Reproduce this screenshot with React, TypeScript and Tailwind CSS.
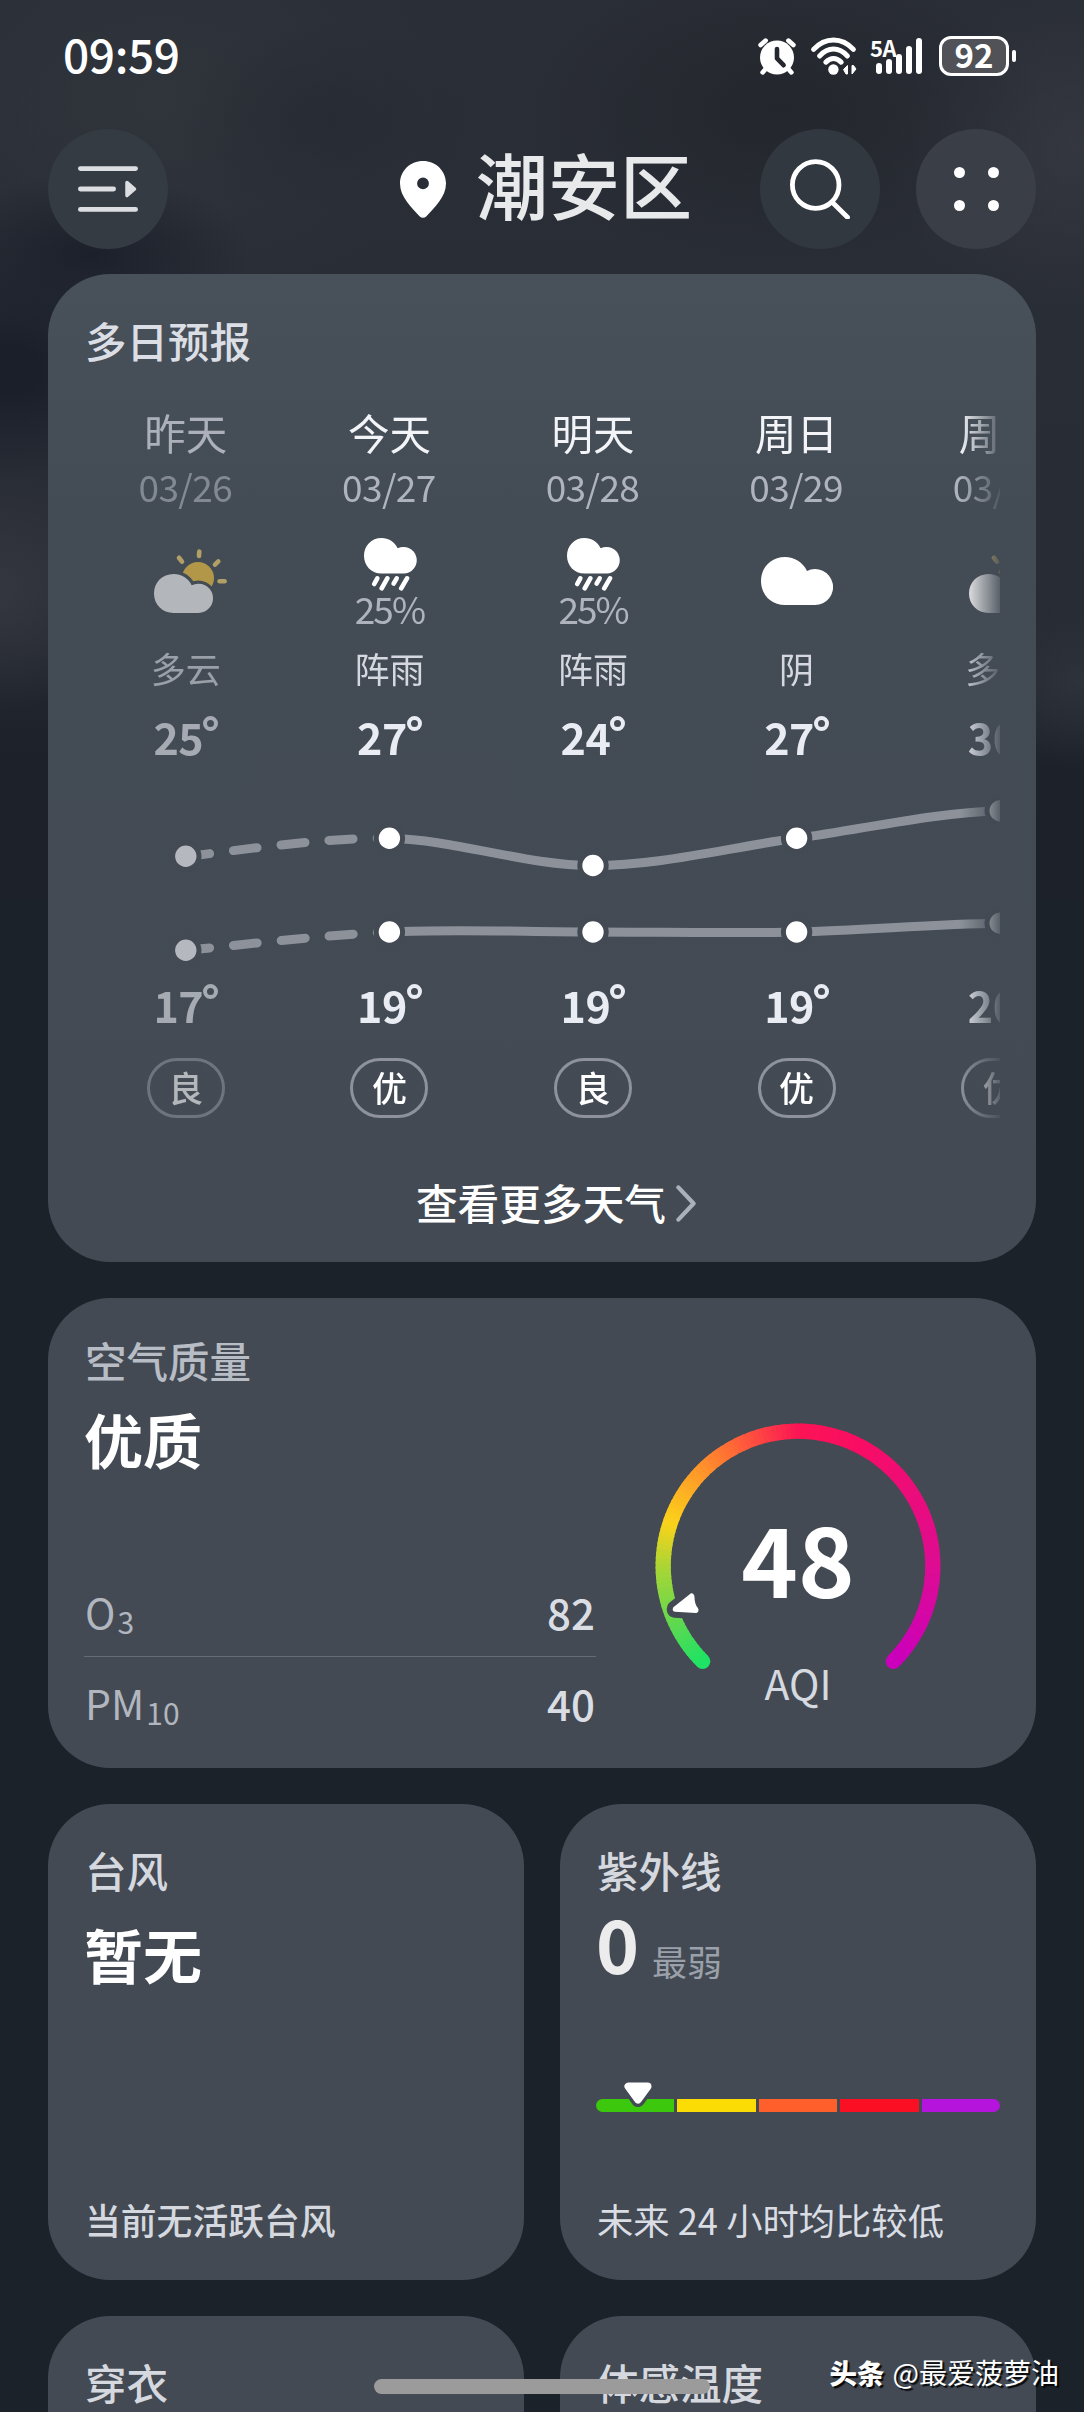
// ============================================
// WEATHER HOME SCREEN
// Multi-day forecast, air quality, typhoon and UV cards
// ============================================

import type { ReactNode } from 'react';

type Condition = 'partly' | 'rain' | 'cloudy';

interface DayForecast {
  label: string;
  date: string;
  condition: Condition;
  chance?: string;
  desc: string;
  high: number;
  low: number;
  air: string;
  past?: boolean;
}

const days: DayForecast[] = [
  { label: '昨天', date: '03/26', condition: 'partly', desc: '多云', high: 25, low: 17, air: '良', past: true },
  { label: '今天', date: '03/27', condition: 'rain', chance: '25%', desc: '阵雨', high: 27, low: 19, air: '优' },
  { label: '明天', date: '03/28', condition: 'rain', chance: '25%', desc: '阵雨', high: 24, low: 19, air: '良' },
  { label: '周日', date: '03/29', condition: 'cloudy', desc: '阴', high: 27, low: 19, air: '优' },
  { label: '周一', date: '03/30', condition: 'partly', desc: '多云', high: 30, low: 20, air: '优' },
];

// Chart geometry, one point per day column.
// The sixth value is off screen and only bends the end of the line.
const COL = 203.6;
const highY = [96.3, 78.3, 105.5, 78.3, 50.7, 66];
const lowY = [190.3, 172, 172, 172, 163.3, 168];

const colX = (i: number) => COL * (i + 0.5);

// Smooth curve through the points between two indexes
const curve = (ys: number[], from: number, to: number) => {
  const at = (i: number) => {
    const k = Math.max(0, Math.min(ys.length - 1, i));
    return { x: colX(k), y: ys[k] };
  };
  let d = `M${at(from).x} ${at(from).y}`;
  for (let i = from; i < to; i++) {
    const p0 = at(i - 1);
    const p1 = at(i);
    const p2 = at(i + 1);
    const p3 = at(i + 2);
    d += ` C${p1.x + (p2.x - p0.x) / 6} ${p1.y + (p2.y - p0.y) / 6} ${p2.x - (p3.x - p1.x) / 6} ${p2.y - (p3.y - p1.y) / 6} ${p2.x} ${p2.y}`;
  }
  return d;
};

// ---------- Weather icons ----------

const CLOUD = 'M24 0C33.5 0 42 5.4 46 13.9A18 18 0 1 1 54 48H24C10 48 0 37.5 0 24S10 0 24 0Z';

const WeatherIcon = ({ condition }: { condition: Condition }) => {
  if (condition === 'rain') {
    return (
      <svg className="ml-[2px] block h-[53px] w-[53px]" viewBox="0 0 53 53" fill="none">
        <path d={CLOUD} transform="scale(.732 .742)" fill="#fff" />
        <g stroke="#fff" strokeWidth="4.6" strokeLinecap="round">
          <path d="M13.3 40.3 10.2 46" />
          <path d="M23.3 40.3 17.7 50.3" />
          <path d="M32.7 40.3 29.6 45.6" />
          <path d="M43 40.3 37.2 50.3" />
        </g>
      </svg>
    );
  }
  if (condition === 'cloudy') {
    return (
      <svg className="block h-[48px] w-[72px]" viewBox="0 0 72 48">
        <path d={CLOUD} fill="#fff" />
      </svg>
    );
  }
  return (
    <svg className="ml-[10px] block h-[64px] w-[73px] overflow-visible" viewBox="0 0 73 64" fill="none">
      <circle cx="44" cy="29" r="16" fill="#fdca40" />
      <g stroke="#fbd873" strokeWidth="4.6" strokeLinecap="round">
        <path d="M45.3 2.6 45 7" />
        <path d="M25 8.8 28 12.6" />
        <path d="M64.3 12.4 61 15.6" />
        <path d="M65.6 32.3H70.6" />
      </g>
      <path d={CLOUD} transform="translate(0 25) scale(.82 .81)" fill="#fff" stroke="#454c56" strokeWidth="8" />
      <path d={CLOUD} transform="translate(0 25) scale(.82 .81)" fill="#fff" />
    </svg>
  );
};

// ---------- Status bar ----------

const StatusBar = () => (
  <div className="flex h-[129px] items-start justify-between pt-[33px] pr-[68px] pl-[63px] text-white">
    <span className="text-[46px] leading-[41px] font-medium tracking-[-0.4px]">09:59</span>
    <div className="flex h-[46px] items-center">
      {/* Alarm */}
      <svg className="h-[38px] w-[40px]" viewBox="0 0 40 38" fill="none">
        <circle cx="20" cy="20.5" r="17" fill="#fff" />
        <g stroke="#fff" strokeWidth="4.6" strokeLinecap="round">
          <path d="M3.6 8 8.6 3.6M36.4 8 31.4 3.6M8.6 32 5.6 35.4M31.4 32 34.4 35.4" />
        </g>
        <path d="M20 12v9.4l6.6 6.8" stroke="#24272e" strokeWidth="4.6" strokeLinecap="round" strokeLinejoin="round" />
      </svg>
      {/* Wi-Fi */}
      <svg className="ml-[13px] h-[38px] w-[49px]" viewBox="0 0 49 38" fill="none">
        <g stroke="#fff" strokeWidth="5" strokeLinecap="round">
          <path d="M3.6 12.4C15-.2 32-.2 43.4 12.4" />
          <path d="M9.6 19C18 9.8 29 9.8 37.4 19" />
          <path d="M15.8 25.2C20.5 20.2 26.5 20.2 31.2 25.2" />
        </g>
        <circle cx="23.4" cy="32.5" r="5.2" fill="#fff" />
        <path d="M37.5 28.5v8.5h-1.5l-2.5-4.5ZM42 37v-8.5h1.5l2.5 3.5Z" fill="#fff" stroke="#fff" strokeWidth="1" />
      </svg>
      {/* Signal */}
      <div className="ml-[11px] flex h-[38px] w-[54px] items-start">
        <span className="w-[4px] text-[22px] leading-[20px] font-bold tracking-[-0.5px] whitespace-nowrap">5A</span>
        <div className="ml-[2px] flex h-[37px] items-end gap-[4px]">
          <div className="h-[11px] w-[6px] rounded-full bg-white" />
          <div className="h-[15px] w-[6px] rounded-full bg-white" />
          <div className="h-[20px] w-[6px] rounded-full bg-white" />
          <div className="h-[28px] w-[6px] rounded-full bg-white" />
          <div className="h-[36px] w-[6px] rounded-full bg-white" />
        </div>
      </div>
      {/* Battery */}
      <div className="ml-[15px] flex h-[40px] w-[70px] items-center justify-center rounded-[12px] border-[3px] border-white bg-[#505257]">
        <span className="-mt-[4px] text-[33px] leading-[34px] font-bold">92</span>
      </div>
      <div className="ml-[3px] h-[12px] w-[4px] rounded-full bg-white" />
    </div>
  </div>
);

// ---------- Header ----------

const Header = () => (
  <header className="flex h-[120px] items-center px-[48px]">
    <button className="flex size-[120px] items-center justify-center rounded-full bg-[#343b43]">
      <svg className="h-[48px] w-[62px]" viewBox="0 0 62 48" fill="none">
        <g stroke="#dcdee1" strokeWidth="4.8" strokeLinecap="round">
          <path d="M3.4 3.6H58.6M3.4 24H36.6M3.4 44.4H58.6" />
        </g>
        <path d="M50 17.5 57.5 24 50 30.5Z" fill="#dcdee1" stroke="#dcdee1" strokeWidth="3.5" strokeLinejoin="round" />
      </svg>
    </button>
    <div className="ml-[232px] flex items-center">
      <svg className="h-[57px] w-[46px]" viewBox="0 0 46 57">
        <path
          fillRule="evenodd"
          d="M23 0C36 0 46 10 46 22.5 46 36 34 47 26.5 55.2Q23 58.3 19.5 55.2C12 47 0 36 0 22.5 0 10 10 0 23 0ZM23 16.5A5.9 5.9 0 1 0 23 28.3 5.9 5.9 0 1 0 23 16.5Z"
          fill="#fff"
        />
      </svg>
      <h1 className="-mt-[12px] ml-[30px] text-[72px] leading-[80px] font-medium text-[#e8e9eb]">潮安区</h1>
    </div>
    <button className="ml-auto flex size-[120px] items-center justify-center rounded-full bg-[#323840]">
      <svg className="h-[60px] w-[60px]" viewBox="0 0 60 60" fill="none" stroke="#fff" strokeWidth="4.8" strokeLinecap="round">
        <circle cx="25.7" cy="26" r="23.3" />
        <path d="M42 43 57.5 58.3" />
      </svg>
    </button>
    <button className="ml-[36px] flex size-[120px] items-center justify-center rounded-full bg-[#3a3e47]">
      <div className="grid grid-cols-2 gap-x-[23px] gap-y-[22px]">
        <div className="size-[11px] rounded-full bg-white" />
        <div className="size-[11px] rounded-full bg-white" />
        <div className="size-[11px] rounded-full bg-white" />
        <div className="size-[11px] rounded-full bg-white" />
      </div>
    </button>
  </header>
);

// ---------- Multi-day forecast ----------

const Temperature = ({ value }: { value: number }) => (
  <div className="flex h-[48px] items-start text-[43px] leading-[48px] font-bold text-[#e9ecf2]">
    <span className="tracking-[-0.5px]">{value}</span>
    <span className="mt-[4px] size-[15px] rounded-full border-4 border-[#e9ecf2]" />
  </div>
);

const TrendChart = () => (
  <svg className="block h-[220px] w-[1018px]" viewBox="0 0 1018 220" fill="none">
    <g stroke="#8d929a" strokeWidth="9">
      {[highY, lowY].map((ys, i) => (
        <g key={i}>
          <path d={curve(ys, 0, 1)} strokeDasharray="24 24" strokeLinecap="round" />
          <path d={curve(ys, 1, 4)} />
        </g>
      ))}
    </g>
    {[highY, lowY].map((ys) =>
      ys.slice(0, 5).map((y, i) => (
        <circle key={`${i}-${y}`} cx={colX(i)} cy={y} r="13.2" fill={i === 0 ? '#b5b8be' : '#fff'} stroke="#434a53" strokeWidth="5" />
      ))
    )}
  </svg>
);

const ForecastCard = () => (
  <section className="mx-[48px] mt-[25px] h-[988px] rounded-[62px] bg-linear-to-b from-[#48505a] via-[#434b55] via-25% to-[#434a53] px-[36px] pt-[42px]">
    <h2 className="pl-[1px] text-[41.5px] leading-[48px] font-medium text-[#dbdee4]">多日预报</h2>
    <div className="mt-[20px] overflow-hidden pt-[24px] [mask-image:linear-gradient(to_right,black_calc(100%-40px),rgba(0,0,0,0.12))]">
      <div className="flex w-[1018px]">
        {days.map((day) => (
          <div key={day.date} className={`flex w-[203.6px] flex-col items-center ${day.past ? 'opacity-60' : ''}`}>
            <div className="text-[41.5px] leading-[48px] text-[#f2f4f8]">{day.label}</div>
            <div className="mt-[6px] -ml-[1px] text-[37px] leading-[48px] tracking-[-0.6px] text-[#aeb3bc]">{day.date}</div>
            <div className="mt-[15px] flex h-[112px] flex-col items-center justify-center">
              <WeatherIcon condition={day.condition} />
              {day.chance && (
                <div className="text-[37px] leading-[34px] tracking-[-2px] text-[#aeb3bc]">{day.chance}</div>
              )}
            </div>
            <div className="mt-[9px] text-[35px] leading-[44px] text-[#d5d9df]">{day.desc}</div>
            <div className="mt-[22px]">
              <Temperature value={day.high} />
            </div>
          </div>
        ))}
      </div>
      <TrendChart />
      <div className="flex w-[1018px]">
        {days.map((day) => (
          <div key={day.date} className={`flex w-[203.6px] flex-col items-center ${day.past ? 'opacity-60' : ''}`}>
            <Temperature value={day.low} />
            <div className="mt-[30px] flex h-[60px] w-[78px] items-center justify-center rounded-full border-[3px] border-[#8d929b] pb-[2px] text-[35px] leading-[50px] font-medium text-white">
              {day.air}
            </div>
          </div>
        ))}
      </div>
    </div>
    <div className="mt-[59px] flex items-center justify-center gap-[10px] pl-[28px]">
      <span className="text-[41.7px] leading-[50px] font-medium text-white">查看更多天气</span>
      <svg className="mt-[3px] h-[37px] w-[20px]" viewBox="0 0 20 37" fill="none" stroke="#abb1bb" strokeWidth="4.2" strokeLinecap="round" strokeLinejoin="round">
        <path d="M2.4 2.4 17.6 18.5 2.4 34.6" />
      </svg>
    </div>
  </section>
);

// ---------- Air quality ----------

const gaugeStops: [number, number[]][] = [
  [0, [30, 227, 100]],
  [0.08, [100, 216, 78]],
  [0.167, [172, 213, 52]],
  [0.235, [251, 211, 26]],
  [0.33, [255, 150, 42]],
  [0.39, [255, 107, 53]],
  [0.5, [252, 20, 84]],
  [0.6, [248, 13, 100]],
  [0.83, [222, 12, 146]],
  [1, [202, 0, 188]],
];

const gaugeColor = (t: number) => {
  const i = Math.max(1, gaugeStops.findIndex(([s]) => s >= t));
  const [a, ca] = gaugeStops[i - 1];
  const [b, cb] = gaugeStops[i];
  const k = (t - a) / (b - a);
  return `rgb(${ca.map((c, n) => Math.round(c + (cb[n] - c) * k)).join(',')})`;
};

const gaugePoint = (t: number) => {
  const a = ((135 + 270 * t) * Math.PI) / 180;
  return `${(143 + 134.8 * Math.cos(a)).toFixed(2)} ${(143 + 134.8 * Math.sin(a)).toFixed(2)}`;
};

const SEGMENTS = 135;
const POINTER = 'M36 171.5 19 185Q18 187.5 20 187.8L41 189Q43.5 188 42 185.5 38.5 181.5 38.5 174 38 170.5 36 171.5Z';

const AqiGauge = () => (
  <div className="relative h-[286px] w-[286px]">
    <svg className="block size-[286px]" viewBox="0 0 286 286" fill="none">
      <g strokeWidth="15.3">
        <path d={`M${gaugePoint(0)}h.01`} stroke={gaugeColor(0)} strokeLinecap="round" />
        <path d={`M${gaugePoint(1)}h.01`} stroke={gaugeColor(1)} strokeLinecap="round" />
        {Array.from({ length: SEGMENTS }, (_, i) => (
          <path
            key={i}
            d={`M${gaugePoint(i / SEGMENTS)}A134.8 134.8 0 0 1 ${gaugePoint(Math.min(1, (i + 1.3) / SEGMENTS))}`}
            stroke={gaugeColor((i + 0.5) / SEGMENTS)}
          />
        ))}
      </g>
      <path d={POINTER} fill="#434a53" stroke="#434a53" strokeWidth="14" strokeLinejoin="round" />
      <path d={POINTER} fill="#fff" stroke="#fff" strokeWidth="2" strokeLinejoin="round" />
    </svg>
    <div className="absolute inset-x-0 top-[84px] text-center text-[96px] leading-[100px] font-bold text-white">48</div>
    <div className="absolute inset-x-0 top-[235px] text-center text-[41px] leading-[48px] text-[#d5d9e0]">AQI</div>
  </div>
);

const Pollutant = ({ name, sub, value }: { name: string; sub: string; value: string }) => (
  <div className="flex h-[90px] items-center justify-between px-[1px] pt-[2px]">
    <span className="flex items-baseline pt-[3px] text-[41px] leading-[48px] text-[#b1b6bf]">
      {name}
      <span className="relative top-[5px] ml-[2px] text-[30px]">{sub}</span>
    </span>
    <span className="text-[42px] leading-[48px] font-medium text-[#dadde4]">{value}</span>
  </div>
);

const AirQualityCard = () => (
  <section className="mx-[48px] mt-[36px] flex h-[470px] rounded-[62px] bg-[#434a53] px-[36px] pt-[38px]">
    <div className="w-[512px]">
      <h2 className="pl-[1px] text-[41.5px] leading-[48px] font-medium text-[#b7bcc5]">空气质量</h2>
      <div className="pt-[21px] text-[59px] leading-[68px] font-bold text-white">优质</div>
      <div className="mt-[93px] border-b border-[#666c74]">
        <Pollutant name="O" sub="3" value="82" />
      </div>
      <Pollutant name="PM" sub="10" value="40" />
    </div>
    <div className="pt-[87px] pl-[59px]">
      <AqiGauge />
    </div>
  </section>
);

// ---------- Small cards ----------

const SmallCard = ({ title, children }: { title: string; children?: ReactNode }) => (
  <section className="flex h-[476px] flex-col rounded-[62px] bg-[#434a53] px-[36px] pt-[42px] pb-[37px]">
    <h2 className="pl-[1px] text-[41.5px] leading-[48px] font-medium text-[#d5d8df]">{title}</h2>
    {children}
  </section>
);

const UvScale = () => (
  <div className="relative mt-[122px]">
    <div className="flex h-[13px] gap-[3px] overflow-hidden rounded-full">
      <div className="flex-1 bg-[#3cc80c]" />
      <div className="flex-1 bg-[#fbdc05]" />
      <div className="flex-1 bg-[#ff5f2b]" />
      <div className="flex-1 bg-[#fb1023]" />
      <div className="flex-1 bg-[#b414dc]" />
    </div>
    <svg className="absolute -top-[17px] left-[24px] h-[26px] w-[36px] overflow-visible" viewBox="0 0 36 26">
      <path d="M8 4H28L18 18Z" fill="#434a53" stroke="#434a53" strokeWidth="14" strokeLinejoin="round" />
      <path d="M8.5 4.5H27.5L18 17.5Z" fill="#fff" stroke="#fff" strokeWidth="8" strokeLinejoin="round" />
    </svg>
  </div>
);

export default function App() {
  return (
    <div className="relative h-[2412px] w-[1084px] overflow-hidden bg-[#1c222a] font-['Noto_Sans_CJK_SC','Noto_Sans',sans-serif]">
      {/* Night clouds behind the upper part of the page */}
      <div className="absolute inset-x-0 top-0 h-[900px] bg-[radial-gradient(150px_110px_at_10px_370px,#1b1f29_20%,transparent),radial-gradient(130px_120px_at_0px_590px,#343740,transparent),radial-gradient(120px_90px_at_1080px_680px,#2e323b,transparent),radial-gradient(160px_80px_at_90px_255px,#1c202a,transparent),radial-gradient(260px_160px_at_780px_110px,#23262c,transparent),radial-gradient(160px_100px_at_330px_120px,#272b33,transparent),radial-gradient(300px_200px_at_160px_100px,#30343b,transparent),radial-gradient(200px_160px_at_1084px_150px,#343740,transparent),linear-gradient(to_bottom,#2a2e37_0%,#282c35_65%,#1c212a_84%)]" />

      <div className="relative">
        <StatusBar />
        <Header />
        <ForecastCard />
        <AirQualityCard />

        <div className="mt-[36px] grid grid-cols-2 gap-[36px] px-[48px]">
          <SmallCard title="台风">
            <div className="mt-[26px] text-[59px] leading-[68px] font-bold text-white">暂无</div>
            <div className="mt-auto pl-[1px] text-[35.8px] leading-[48px] font-medium text-[#d5d8df]">当前无活跃台风</div>
          </SmallCard>
          <SmallCard title="紫外线">
            <div className="mt-[7px] flex h-[76px] items-baseline">
              <span className="text-[73px] leading-[82px] font-bold text-[#ececec]">0</span>
              <span className="relative top-[2px] ml-[13px] text-[35px] text-[#9ba1aa]">最弱</span>
            </div>
            <UvScale />
            <div className="mt-auto pl-[1px] text-[36.3px] leading-[48px] whitespace-nowrap text-[#dadde4]">未来 24 小时均比较低</div>
          </SmallCard>
          <SmallCard title="穿衣" />
          <SmallCard title="体感温度" />
        </div>
      </div>

      {/* Gesture bar and post signature lie over the page */}
      <div className="absolute top-[2379px] left-[374px] h-[15px] w-[336px] rounded-full bg-[#9b9b9b]" />
      <div className="absolute top-[2352px] right-[25px] flex items-center gap-[8px] leading-[40px] whitespace-nowrap text-white [text-shadow:2px_2px_1px_rgba(0,0,0,0.9)]">
        <span className="text-[27.5px] font-black">头条</span>
        <span className="text-[28px]">@最爱菠萝油</span>
      </div>
    </div>
  );
}
